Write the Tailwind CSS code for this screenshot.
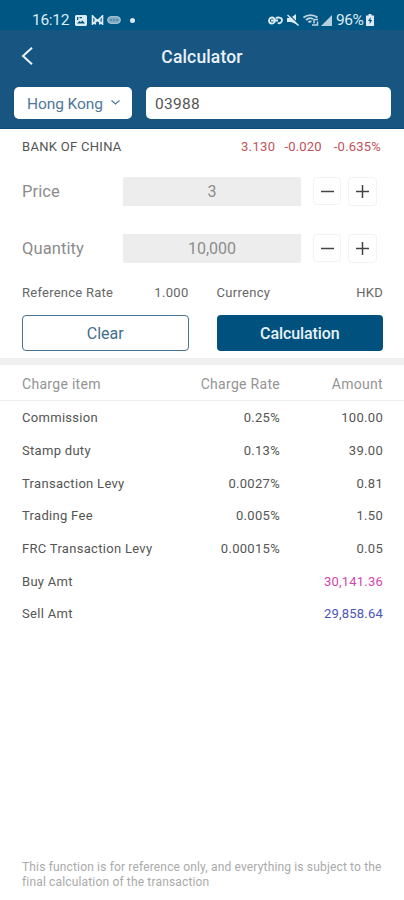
<!DOCTYPE html>
<html lang="en">
<head>
<meta charset="utf-8">
<meta name="viewport" content="width=device-width, initial-scale=1">
<title>Calculator</title>
<script src="https://cdn.jsdelivr.net/npm/@tailwindcss/browser@4"></script>
</head>
<body class="bg-white">
<div class="w-[404px] h-[900px] overflow-hidden flex flex-col bg-white font-['Roboto',sans-serif] text-[13px] leading-4 tracking-[0.3px] text-[#555]">
  <div class="h-[30px] shrink-0 bg-[#005683] text-[#dcebf3] flex items-center justify-between pl-8 pr-[30px] pt-[10px]">
    <div class="flex items-center">
      <span class="text-[15.5px] leading-5 w-[43px] tracking-[-0.3px] whitespace-nowrap">16:12</span>
      <svg class="w-3 h-[11px]" viewBox="0 0 12 11"><path fill="currentColor" fill-rule="evenodd" d="M1 0h10l1 1v9l-1 1H1l-1-1V1zM2 8.500h8L7.500 5.500 6 7 4.500 6zM2 2v3h1.300V2zM4.500 2v1.300H7V2z"/></svg>
      <svg class="w-[13px] h-[10px] ml-1" viewBox="0 0 13 10"><path fill="none" stroke="currentColor" stroke-width="1.600" d="M1.500 0v10M11.500 0v10M1.500 1l5 4.500 5-4.500M4.300 9.500V4M8.700 9.500V4M1.500 8.500l5-3 5 3"/></svg>
      <svg class="w-[14px] h-2 ml-[3px]" viewBox="0 0 14 8"><rect x=".6" y=".6" width="12.800" height="6.800" rx="3.400" fill="#7fa9c3" stroke="#a9c7d8"/><path d="M3 4h2M6 4h2M9 4h2" stroke="#4d83a3" stroke-width="1.300"/></svg>
      <span class="size-[5px] rounded-full bg-current ml-[9px]"></span>
    </div>
    <div class="flex items-center">
      <svg class="w-[15px] h-[9px]" viewBox="0 0 15 9"><path fill="none" stroke="currentColor" stroke-width="1.800" d="M7 4.500a3 3 0 1 0-6 0 3 3 0 0 0 6 0zM3 4.500h7M8 2.500c1-1.500 6-1.500 6 1.500S11 8 10 6.500"/></svg>
      <svg class="w-3 h-[12px] ml-1" viewBox="0 0 12 12"><path fill="currentColor" d="M0 4h3.500L9 0v10L4 8H0z"/><path stroke="#005683" stroke-width="1.200" d="M1.500 0L12 10.500"/><path stroke="currentColor" stroke-width="1.500" d="M.5 1l11 10.500"/></svg>
      <svg class="w-4 h-[12px] ml-1" viewBox="0 0 16 12"><path fill="none" stroke="#bdd5e2" stroke-width="1.800" d="M.5 3.500c4-3.300 10-3.300 14 0M3 6c2.500-2.300 5-2.300 7-1M5.500 8.300c1-1 2-1 3-.5"/><path fill="none" stroke="#bdd5e2" stroke-width="1.500" d="M15 5.500h-4v4M9 11h5.500V7.500"/></svg>
      <svg class="w-[11px] h-[11px] ml-[2px]" viewBox="0 0 11 11"><path fill="#b4cfde" d="M11 0v11H0z"/></svg>
      <span class="text-[15.5px] leading-5 ml-1 w-[29px] tracking-[-0.4px] whitespace-nowrap">96%</span>
      <svg class="w-2 h-[12px] ml-px" viewBox="0 0 8 12"><path fill="currentColor" d="M2.500 0h3v1.500H8V12H0V1.500h2.500z"/><path fill="#005683" d="M4.700 3L2 7h1.700v3L6.200 6H4.500z"/></svg>
    </div>
  </div>
  <header class="h-[99px] shrink-0 bg-[#185681] border-b border-[#0d4d79]">
    <div class="h-[52px] grid grid-cols-[1fr_auto_1fr] items-center pl-[21px] pr-[21px]">
      <svg class="w-3 h-[18px] -mt-px" viewBox="0 0 12 18"><path fill="none" stroke="#eef5fa" stroke-width="2" d="M11 .8L2 9l9 8.200"/></svg>
      <h1 class="text-[17.5px] leading-6 font-medium text-[#e9f2f8] tracking-[0.15px] pt-px">Calculator</h1>
    </div>
    <div class="flex gap-[14px] pl-[14px] pr-[13px] pt-[5px]">
      <div class="w-[118px] h-8 rounded-[5px] bg-white flex items-center justify-between pl-[13px] pr-3 pt-[2px] text-[#50789a] text-[15.5px] tracking-[-0.1px] whitespace-nowrap">Hong Kong
        <svg class="w-[9px] h-[5px] -mt-[3px]" viewBox="0 0 9 5"><path fill="none" stroke="currentColor" stroke-width="1.300" d="M.5.5l4 3.500 4-3.500"/></svg>
      </div>
      <div class="flex-1 h-8 rounded-[5px] bg-white flex items-center pl-[9px] pt-[2px] text-[15.5px] tracking-[0.3px] text-[#555]">03988</div>
    </div>
  </header>
  <section class="shrink-0 h-[229px] pl-[22px] pr-[21px]">
    <div class="flex h-9 items-center pr-[2px]">
      <span class="flex-1">BANK OF CHINA</span>
      <span class="text-[#c35059] tracking-[0.35px]">3.130</span>
      <span class="text-[#c35059] ml-[9px] tracking-[0.2px]">-0.020</span>
      <span class="text-[#c35059] ml-3 tracking-[0.2px]">-0.635%</span>
    </div>
    <div class="flex h-[28px] mt-3 items-center text-[16.5px] tracking-[0.1px] text-[#8c8c8c]">
      <span class="w-[101px] pt-px">Price</span>
      <span class="w-[178px] h-[29px] bg-[#ededed] flex items-center justify-center text-[16px] pt-[2px]">3</span>
      <span class="ml-3 size-[28px] rounded border border-[#f3f3f3] flex items-center justify-center"><svg class="size-[13px]" viewBox="0 0 13 13"><path stroke="#444" stroke-width="1.500" d="M0 6.500h13"/></svg></span>
      <span class="ml-[7px] size-[29px] rounded border border-[#f3f3f3] flex items-center justify-center"><svg class="size-[13px]" viewBox="0 0 13 13"><path stroke="#444" stroke-width="1.500" d="M0 6.500h13M6.500 0v13"/></svg></span>
    </div>
    <div class="flex h-[28px] mt-[29px] items-center text-[16.5px] tracking-[0.1px] text-[#8c8c8c]">
      <span class="w-[101px] pt-[2px]">Quantity</span>
      <span class="w-[178px] h-[29px] bg-[#ededed] flex items-center justify-center text-[16px] tracking-[0px] pt-px">10,000</span>
      <span class="ml-3 size-[28px] rounded border border-[#f3f3f3] flex items-center justify-center"><svg class="size-[13px]" viewBox="0 0 13 13"><path stroke="#444" stroke-width="1.500" d="M0 6.500h13"/></svg></span>
      <span class="ml-[7px] size-[29px] rounded border border-[#f3f3f3] flex items-center justify-center"><svg class="size-[13px]" viewBox="0 0 13 13"><path stroke="#444" stroke-width="1.500" d="M0 6.500h13M6.500 0v13"/></svg></span>
    </div>
    <div class="grid grid-cols-2 gap-7 mt-[23px] text-[#666]">
      <div class="flex justify-between"><span class="tracking-[0.25px]">Reference Rate</span><span>1.000</span></div>
      <div class="flex justify-between"><span>Currency</span><span>HKD</span></div>
    </div>
    <div class="grid grid-cols-2 gap-7 mt-[14px] text-[16px] tracking-[0px]">
      <div class="h-9 rounded-[4px] border border-[#477493] text-[#3f708f] flex items-center justify-center pt-[2px]">Clear</div>
      <div class="h-9 rounded-[4px] bg-[#00517d] text-[#e8f2f8] font-medium flex items-center justify-center pt-[2px] tracking-[-0.1px]">Calculation</div>
    </div>
  </section>
  <div class="h-[7px] shrink-0 bg-[#f0f0f0]"></div>
  <section class="flex-1">
    <div class="h-9 border-b border-[#eee] grid grid-cols-[158px_100px_103px] pl-[22px] items-center text-[14px] text-[#949494] pt-[2px]">
      <span>Charge item</span><span class="text-right">Charge Rate</span><span class="text-right">Amount</span>
    </div>
    <div class="grid grid-cols-[158px_100px_103px] auto-rows-[32.65px] pl-[22px] items-center pt-px whitespace-nowrap">
      <span>Commission</span><span class="text-right">0.25%</span><span class="text-right">100.00</span>
      <span>Stamp duty</span><span class="text-right">0.13%</span><span class="text-right">39.00</span>
      <span>Transaction Levy</span><span class="text-right">0.0027%</span><span class="text-right">0.81</span>
      <span>Trading Fee</span><span class="text-right">0.005%</span><span class="text-right">1.50</span>
      <span>FRC Transaction Levy</span><span class="text-right">0.00015%</span><span class="text-right">0.05</span>
      <span>Buy Amt</span><span></span><span class="text-right tracking-[0.2px] text-[#d345b0]">30,141.36</span>
      <span>Sell Amt</span><span></span><span class="text-right tracking-[0.2px] text-[#4b53bd]">29,858.64</span>
    </div>
  </section>
  <footer class="shrink-0 pl-[22px] pb-[11px] text-[12px] leading-[14.5px] tracking-[0.16px] text-[#aaa] whitespace-nowrap">This function is for reference only, and everything is subject to the<br>final calculation of the transaction</footer>
</div>
</body>
</html>
